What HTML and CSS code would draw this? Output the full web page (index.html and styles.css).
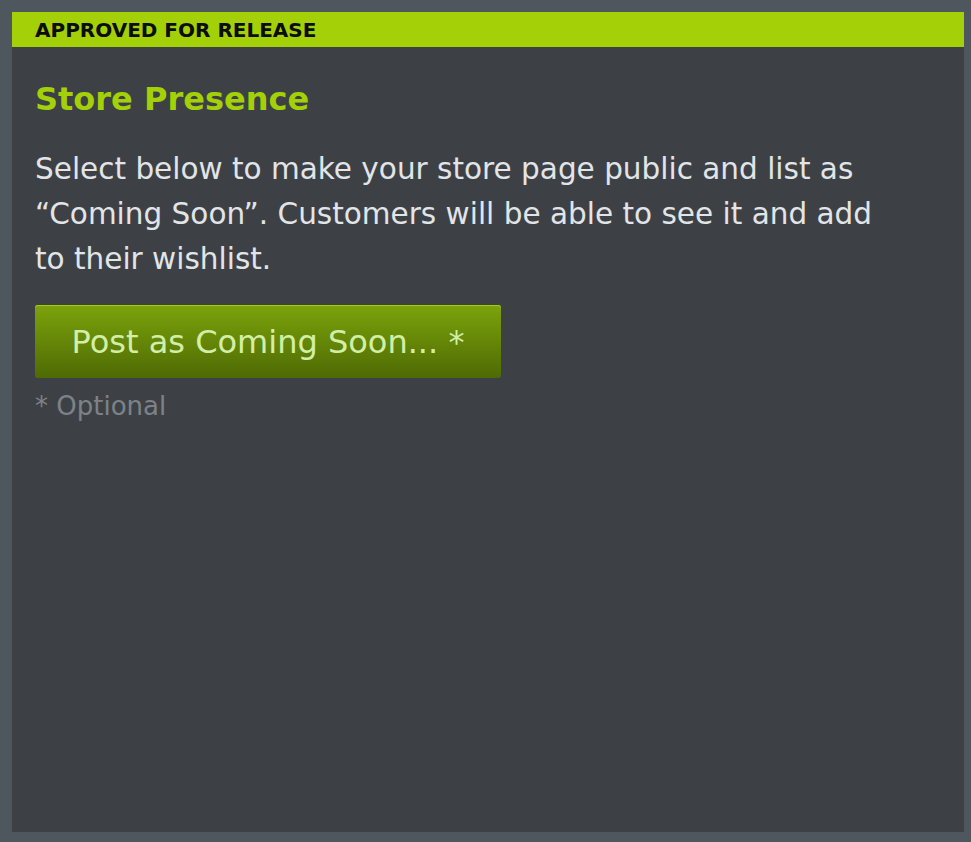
FILE: index.html
```html
<!DOCTYPE html>
<html lang="en">

<head>
    <meta charset="UTF-8">
    <meta name="viewport" content="width=device-width, initial-scale=1.0">
    <title>Store Presence</title>
    <link rel="stylesheet" href="styles.css">
</head>

<body>
    <div class="panel">
        <div class="status-bar">APPROVED FOR RELEASE</div>
        <div class="content">
            <h2>Store Presence</h2>
            <p class="desc">
                Select below to make your store page public and list as
                “Coming Soon”. Customers will be able to see it and add
                to their wishlist.
            </p>
            <button class="btn-green">Post as Coming Soon... *</button>
            <p class="note">* Optional</p>
        </div>
    </div>
</body>

</html>
```

FILE: styles.css
```css
* {
    margin: 0;
    padding: 0;
    box-sizing: border-box;
    font-family: "DejaVu Sans", sans-serif;
}

body {
    background-color: #4f575e;
    padding: 12px 7px 10px 12px;
    height: 100vh;
}

.panel {
    background-color: #3d4146;
    height: 100%;
}

.status-bar {
    background-color: #a4d007;
    color: #0b0d0b;
    font-size: 20px;
    font-weight: 700;
    height: 35px;
    line-height: 36px;
    padding-left: 23px;
}

.content {
    padding: 30px 23px;
}

.content h2 {
    color: #a4d007;
    font-size: 32px;
    font-weight: 700;
    line-height: 44px;
}

.desc {
    color: #e2e5e8;
    font-size: 29.5px;
    line-height: 45px;
    margin-top: 26px;
    max-width: 870px;
}

.btn-green {
    display: block;
    margin-top: 23px;
    width: 466px;
    height: 73px;
    border: none;
    border-radius: 3px;
    background: linear-gradient(to bottom, #7ca30b, #4e6a04);
    box-shadow: inset 0 1px 0 #a4d007;
    color: #d2efa8;
    font-size: 32px;
}

.note {
    color: #7d8288;
    font-size: 26px;
    margin-top: 13px;
}
```
